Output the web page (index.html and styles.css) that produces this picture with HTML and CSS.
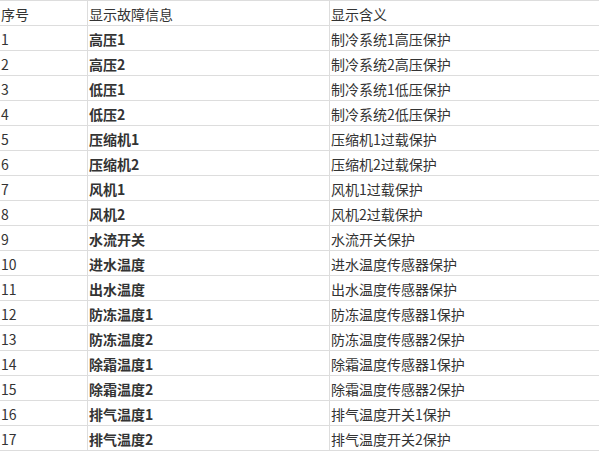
FILE: index.html
```html
<!DOCTYPE html>
<html lang="zh">
<head>
<meta charset="utf-8">
<link rel="stylesheet" href="styles.css">
</head>
<body>
<div class="table">
  <div class="row"><div class="c1">序号</div><div class="c2 head">显示故障信息</div><div class="c3">显示含义</div></div>
  <div class="row"><div class="c1">1</div><div class="c2">高压1</div><div class="c3">制冷系统1高压保护</div></div>
  <div class="row"><div class="c1">2</div><div class="c2">高压2</div><div class="c3">制冷系统2高压保护</div></div>
  <div class="row"><div class="c1">3</div><div class="c2">低压1</div><div class="c3">制冷系统1低压保护</div></div>
  <div class="row"><div class="c1">4</div><div class="c2">低压2</div><div class="c3">制冷系统2低压保护</div></div>
  <div class="row"><div class="c1">5</div><div class="c2">压缩机1</div><div class="c3">压缩机1过载保护</div></div>
  <div class="row"><div class="c1">6</div><div class="c2">压缩机2</div><div class="c3">压缩机2过载保护</div></div>
  <div class="row"><div class="c1">7</div><div class="c2">风机1</div><div class="c3">风机1过载保护</div></div>
  <div class="row"><div class="c1">8</div><div class="c2">风机2</div><div class="c3">风机2过载保护</div></div>
  <div class="row"><div class="c1">9</div><div class="c2">水流开关</div><div class="c3">水流开关保护</div></div>
  <div class="row"><div class="c1">10</div><div class="c2">进水温度</div><div class="c3">进水温度传感器保护</div></div>
  <div class="row"><div class="c1">11</div><div class="c2">出水温度</div><div class="c3">出水温度传感器保护</div></div>
  <div class="row"><div class="c1">12</div><div class="c2">防冻温度1</div><div class="c3">防冻温度传感器1保护</div></div>
  <div class="row"><div class="c1">13</div><div class="c2">防冻温度2</div><div class="c3">防冻温度传感器2保护</div></div>
  <div class="row"><div class="c1">14</div><div class="c2">除霜温度1</div><div class="c3">除霜温度传感器1保护</div></div>
  <div class="row"><div class="c1">15</div><div class="c2">除霜温度2</div><div class="c3">除霜温度传感器2保护</div></div>
  <div class="row"><div class="c1">16</div><div class="c2">排气温度1</div><div class="c3">排气温度开关1保护</div></div>
  <div class="row last"><div class="c1">17</div><div class="c2">排气温度2</div><div class="c3">排气温度开关2保护</div></div>
</div>
</body>
</html>
```
FILE: styles.css
```css
html, body {
  margin: 0;
  padding: 0;
  background: #fff;
}
body {
  font-family: "Noto Sans CJK SC", "Noto Sans", sans-serif;
  font-size: 14px;
  color: #333;
}
.table {
  width: 599px;
  display: flex;
  flex-direction: column;
}
.row {
  display: grid;
  grid-template-columns: 87px 242px 1fr;
  height: 25px;
  box-sizing: border-box;
  border-top: 1px solid #ddd;
}
.row.last {
  height: 26px;
  border-bottom: 1px solid #ddd;
}
.c1, .c2, .c3 {
  display: flex;
  align-items: center;
  padding-left: 1px;
  padding-top: 1px;
  white-space: nowrap;
}
.c2, .c3 {
  border-left: 1px solid #ddd;
}
.c2 {
  font-weight: bold;
}
.c2.head {
  font-weight: normal;
}
```
